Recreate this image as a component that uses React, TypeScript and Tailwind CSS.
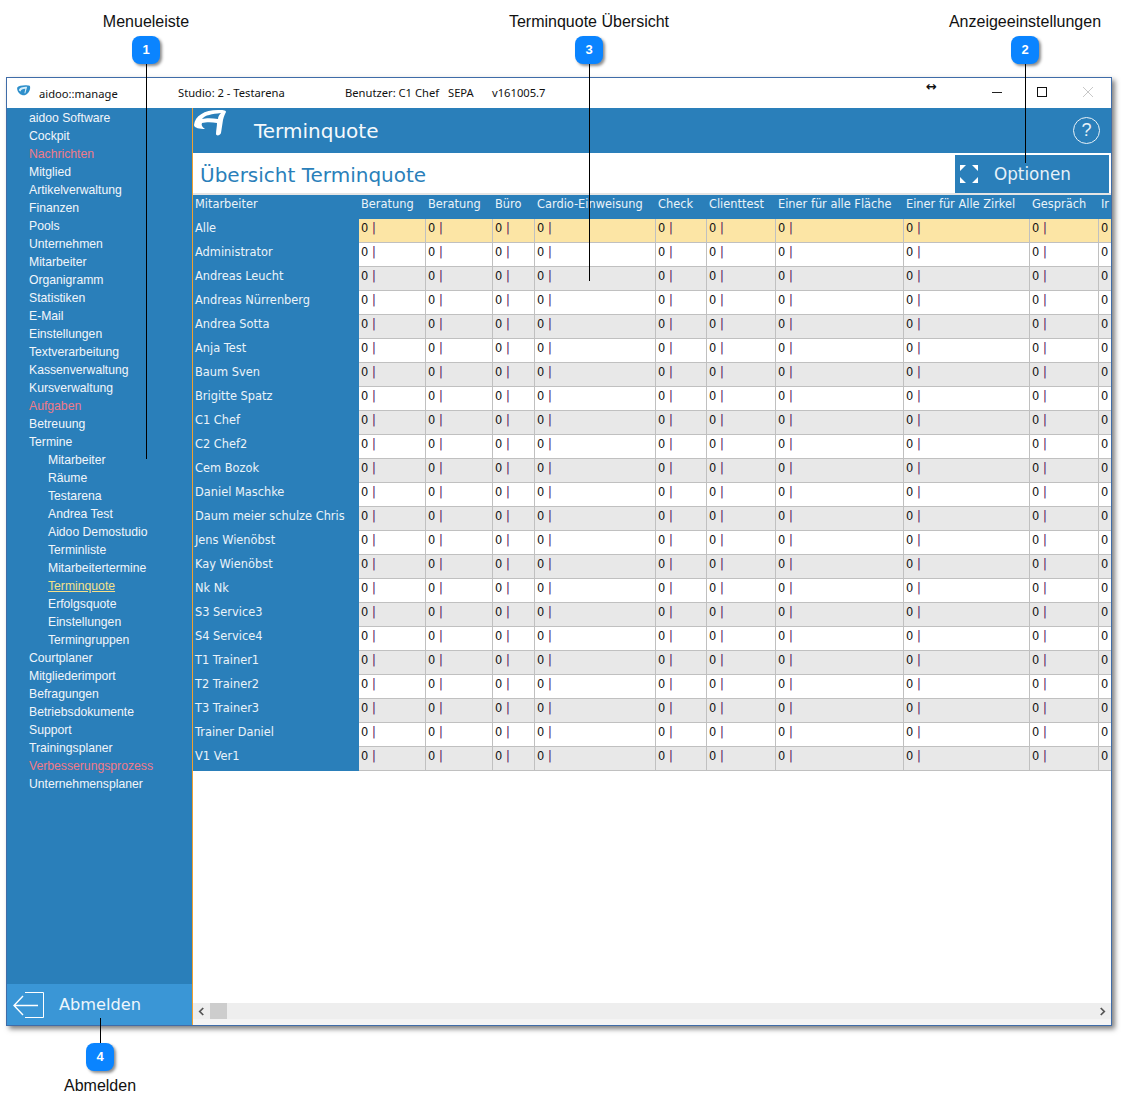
import React from "react";

const menu: { label: string; sub?: boolean; red?: boolean; active?: boolean }[] = [
  { label: "aidoo Software" },
  { label: "Cockpit" },
  { label: "Nachrichten", red: true },
  { label: "Mitglied" },
  { label: "Artikelverwaltung" },
  { label: "Finanzen" },
  { label: "Pools" },
  { label: "Unternehmen" },
  { label: "Mitarbeiter" },
  { label: "Organigramm" },
  { label: "Statistiken" },
  { label: "E-Mail" },
  { label: "Einstellungen" },
  { label: "Textverarbeitung" },
  { label: "Kassenverwaltung" },
  { label: "Kursverwaltung" },
  { label: "Aufgaben", red: true },
  { label: "Betreuung" },
  { label: "Termine" },
  { label: "Mitarbeiter", sub: true },
  { label: "Räume", sub: true },
  { label: "Testarena", sub: true },
  { label: "Andrea Test", sub: true },
  { label: "Aidoo Demostudio", sub: true },
  { label: "Terminliste", sub: true },
  { label: "Mitarbeitertermine", sub: true },
  { label: "Terminquote", sub: true, active: true },
  { label: "Erfolgsquote", sub: true },
  { label: "Einstellungen", sub: true },
  { label: "Termingruppen", sub: true },
  { label: "Courtplaner" },
  { label: "Mitgliederimport" },
  { label: "Befragungen" },
  { label: "Betriebsdokumente" },
  { label: "Support" },
  { label: "Trainingsplaner" },
  { label: "Verbesserungsprozess", red: true },
  { label: "Unternehmensplaner" },
];

const columns = [
  "Beratung",
  "Beratung",
  "Büro",
  "Cardio-Einweisung",
  "Check",
  "Clienttest",
  "Einer für alle Fläche",
  "Einer für Alle Zirkel",
  "Gespräch",
  "Ir",
];

const people = [
  "Alle",
  "Administrator",
  "Andreas Leucht",
  "Andreas Nürrenberg",
  "Andrea Sotta",
  "Anja Test",
  "Baum Sven",
  "Brigitte Spatz",
  "C1 Chef",
  "C2 Chef2",
  "Cem Bozok",
  "Daniel Maschke",
  "Daum meier schulze Chris",
  "Jens Wienöbst",
  "Kay Wienöbst",
  "Nk Nk",
  "S3 Service3",
  "S4 Service4",
  "T1 Trainer1",
  "T2 Trainer2",
  "T3 Trainer3",
  "Trainer Daniel",
  "V1 Ver1",
];

const gridCols =
  "grid grid-cols-[166px_67px_67px_42px_121px_51px_69px_128px_126px_69px_13px] grid-rows-[24px] overflow-hidden";

const Callout = ({ n, label, box, line, text }: { n: number; label: string; box: string; line: string; text: string }) => (
  <>
    <div className={`absolute w-px bg-black ${line}`} />
    <div
      className={`absolute w-[28px] h-[28px] rounded-[8px] bg-[#0a84ff] text-white text-[13px] font-bold flex items-center justify-center shadow-[2px_2px_3px_rgba(0,0,0,0.45)] ${box}`}
    >
      {n}
    </div>
    <div className={`absolute text-[16px] leading-[18px] text-[#111] whitespace-nowrap -translate-x-1/2 ${text}`}>
      {label}
    </div>
  </>
);

export default function App() {
  return (
    <div className="relative w-[1121px] h-[1111px] bg-white overflow-hidden pt-[77px] pl-[6px] font-['Liberation_Sans',sans-serif]">
      <div className="w-[1106px] h-[949px] border border-[#3f6ca8] flex flex-col bg-white shadow-[3px_3px_5px_rgba(0,0,0,0.5)]">
        {/* title bar */}
        <div className="relative h-[30px] shrink-0 flex items-center text-[11.2px] text-[#111] font-['Noto_Sans',sans-serif] whitespace-nowrap">
          <svg viewBox="0 0 16 12" className="ml-[9px] w-[15px] h-[11px] -mt-[5px]">
            <path d="M1 3 C3 0 12 0 15 1 C16 4 14 9 10 11 C6 12 1 9 1 3Z" fill="#2e8fcb" />
            <path d="M3 6 C3 3 7 2 12 2 L10 9 L9 9 L10 4 C7 4 5 5 5 7Z" fill="#d6eefa" />
          </svg>
          <span className="ml-[8px] w-[139px] pt-[2px]">aidoo::manage</span>
          <span className="w-[167px] pt-[1px]">Studio: 2 - Testarena</span>
          <span className="w-[103px] pt-[1px]">Benutzer: C1 Chef</span>
          <span className="w-[44px] pt-[1px]">SEPA</span>
          <span className="pt-[1px]">v161005.7</span>
          <span className="absolute left-[919px] top-[1px] text-[13px] leading-[16px] font-['DejaVu_Sans',sans-serif] font-bold">↔</span>
          <div className="absolute left-[985px] top-[14px] w-[10px] h-px bg-[#222]" />
          <div className="absolute left-[1030px] top-[9px] w-[10px] h-[10px] border border-[#111]" />
          <svg viewBox="0 0 10 10" className="absolute left-[1076px] top-[9px] w-[10px] h-[10px]">
            <path d="M0 0L10 10M10 0L0 10" stroke="#c8c8c8" strokeWidth="1" />
          </svg>
        </div>

        <div className="flex flex-1 min-h-0">
          {/* left menu */}
          <div className="w-[186px] shrink-0 flex flex-col justify-between bg-[#2a7fba] border-r border-[#f0a030]">
            <div className="pt-px">
              {menu.map((m, i) => (
                <div
                  key={i}
                  className={`h-[18px] leading-[18px] text-[12.2px] whitespace-nowrap ${m.sub ? "pl-[41px]" : "pl-[22px]"} ${
                    m.active ? "text-[#f5e08a] underline" : m.red ? "text-[#f07a88]" : "text-[#f2f6fa]"
                  }`}
                >
                  {m.label}
                </div>
              ))}
            </div>
            <div className="h-[41px] bg-[#3a96d6] flex items-center text-[#eef6fc]">
              <svg viewBox="0 0 34 28" className="ml-[5px] w-[34px] h-[28px]" fill="none" stroke="#fff" strokeWidth="1">
                <path d="M13 1.5H31.5V26.5H13" />
                <path d="M26 14.5H2M11 5L2 14.5L11 24" strokeWidth="1.4" />
              </svg>
              <span className="ml-[13px] font-['DejaVu_Sans',sans-serif] text-[16.2px] mt-[1px]">Abmelden</span>
            </div>
          </div>

          {/* main */}
          <div className="flex-1 min-w-0 flex flex-col font-['DejaVu_Sans',sans-serif]">
            <div className="h-[45px] shrink-0 bg-[#2a7fba] relative flex items-center justify-between text-white">
              <svg viewBox="0 0 32 26" className="absolute left-[1px] top-[2px] w-[32px] h-[26px]" fill="#fff" fillRule="evenodd">
                <path d="M0 15 C1 6 10 0 24 0 C28 0 32 0 32 2 C31 4 30 6 29 10 L27 23 C26 26 22 26 22 24 C22 20 23 17 23 13 C18 12 12 12 8 13 C7 15 8 17 11 19 C6 19 0 18 0 15 Z M8 9 C11 5 18 4 27 3 C25 5 24 7 24 9 C18 8 12 8 8 9 Z" />
              </svg>
              <span className="ml-[61px] text-[20px] leading-[24px] text-[#f5f9fc]">Terminquote</span>
              <div className="mr-[11px] w-[27px] h-[27px] rounded-full border-[1.5px] border-[#e8f2f8] flex items-center justify-center text-[18px] text-[#e8f2f8] font-['Liberation_Sans',sans-serif]">
                ?
              </div>
            </div>
            <div className="h-[42px] shrink-0 flex items-end border-b-2 border-[#e5e5e5] pr-[2px]">
              <div className="flex-1 h-[38px] flex items-center pl-[7px] pt-[1px] text-[20px] text-[#2a7fba]">Übersicht Terminquote</div>
              <div className="w-[154px] h-[38px] bg-[#2a7fba] flex items-center text-[#e6f1f8] text-[16.8px]">
                <svg viewBox="0 0 20 20" className="ml-[4px] w-[20px] h-[20px]" fill="#fff">
                  <path d="M1 1H7L1 7Z M19 1V7L13 1Z M1 19V13L7 19Z M19 19H13L19 13Z" />
                </svg>
                <span className="ml-[15px] pt-[1px]">Optionen</span>
              </div>
            </div>

            {/* table */}
            <div className="flex-1 min-h-0 overflow-hidden text-[11.4px]">
              <div className={`${gridCols} h-[24px] bg-[#2a7fba] text-[#eaf3f9] leading-[19px]`}>
                <div className="pl-[2px]">Mitarbeiter</div>
                {columns.map((c, i) => (
                  <div key={i} className="pl-[2px] whitespace-nowrap">{c}</div>
                ))}
              </div>
              {people.map((p, r) => (
                <div key={r} className={`${gridCols} h-[24px]`}>
                  <div className="pl-[2px] bg-[#2a7fba] text-[#eaf3f9] leading-[19px] whitespace-nowrap">{p}</div>
                  {columns.map((_, i) => (
                    <div
                      key={i}
                      className={`pl-[2px] leading-[19px] whitespace-nowrap border-b border-r border-[#c0c0c0] text-[#111] ${
                        r === 0 ? "bg-[#fce5a5]" : r % 2 === 0 ? "bg-[#e8e8e8]" : "bg-white"
                      }`}
                    >
                      0 <span className="text-[#4b0a55]">|</span>
                    </div>
                  ))}
                </div>
              ))}
            </div>

            {/* scrollbar */}
            <div className="h-[16px] shrink-0 bg-[#eeeeee] flex items-center justify-between px-[5px] text-[#555]">
              <div className="flex items-center">
                <svg viewBox="0 0 8 10" className="w-[7px] h-[9px]">
                  <path d="M6 1L2 5L6 9" fill="none" stroke="#555" strokeWidth="2" />
                </svg>
                <div className="ml-[5px] w-[17px] h-[16px] bg-[#cdcdcd]" />
              </div>
              <svg viewBox="0 0 8 10" className="w-[7px] h-[9px]">
                <path d="M2 1L6 5L2 9" fill="none" stroke="#555" strokeWidth="2" />
              </svg>
            </div>
            <div className="h-[6px] shrink-0 bg-[#f4f4f4]" />
          </div>
        </div>
      </div>

      {/* annotations */}
      <Callout n={1} label="Menueleiste" box="left-[132px] top-[36px]" line="left-[146px] top-[64px] h-[395px]" text="left-[146px] top-[13px]" />
      <Callout n={2} label="Anzeigeeinstellungen" box="left-[1011px] top-[36px]" line="left-[1025px] top-[64px] h-[99px]" text="left-[1025px] top-[13px]" />
      <Callout n={3} label="Terminquote Übersicht" box="left-[575px] top-[36px]" line="left-[589px] top-[64px] h-[217px]" text="left-[589px] top-[13px]" />
      <Callout n={4} label="Abmelden" box="left-[86px] top-[1043px]" line="left-[100px] top-[1018px] h-[25px]" text="left-[100px] top-[1077px]" />
    </div>
  );
}
